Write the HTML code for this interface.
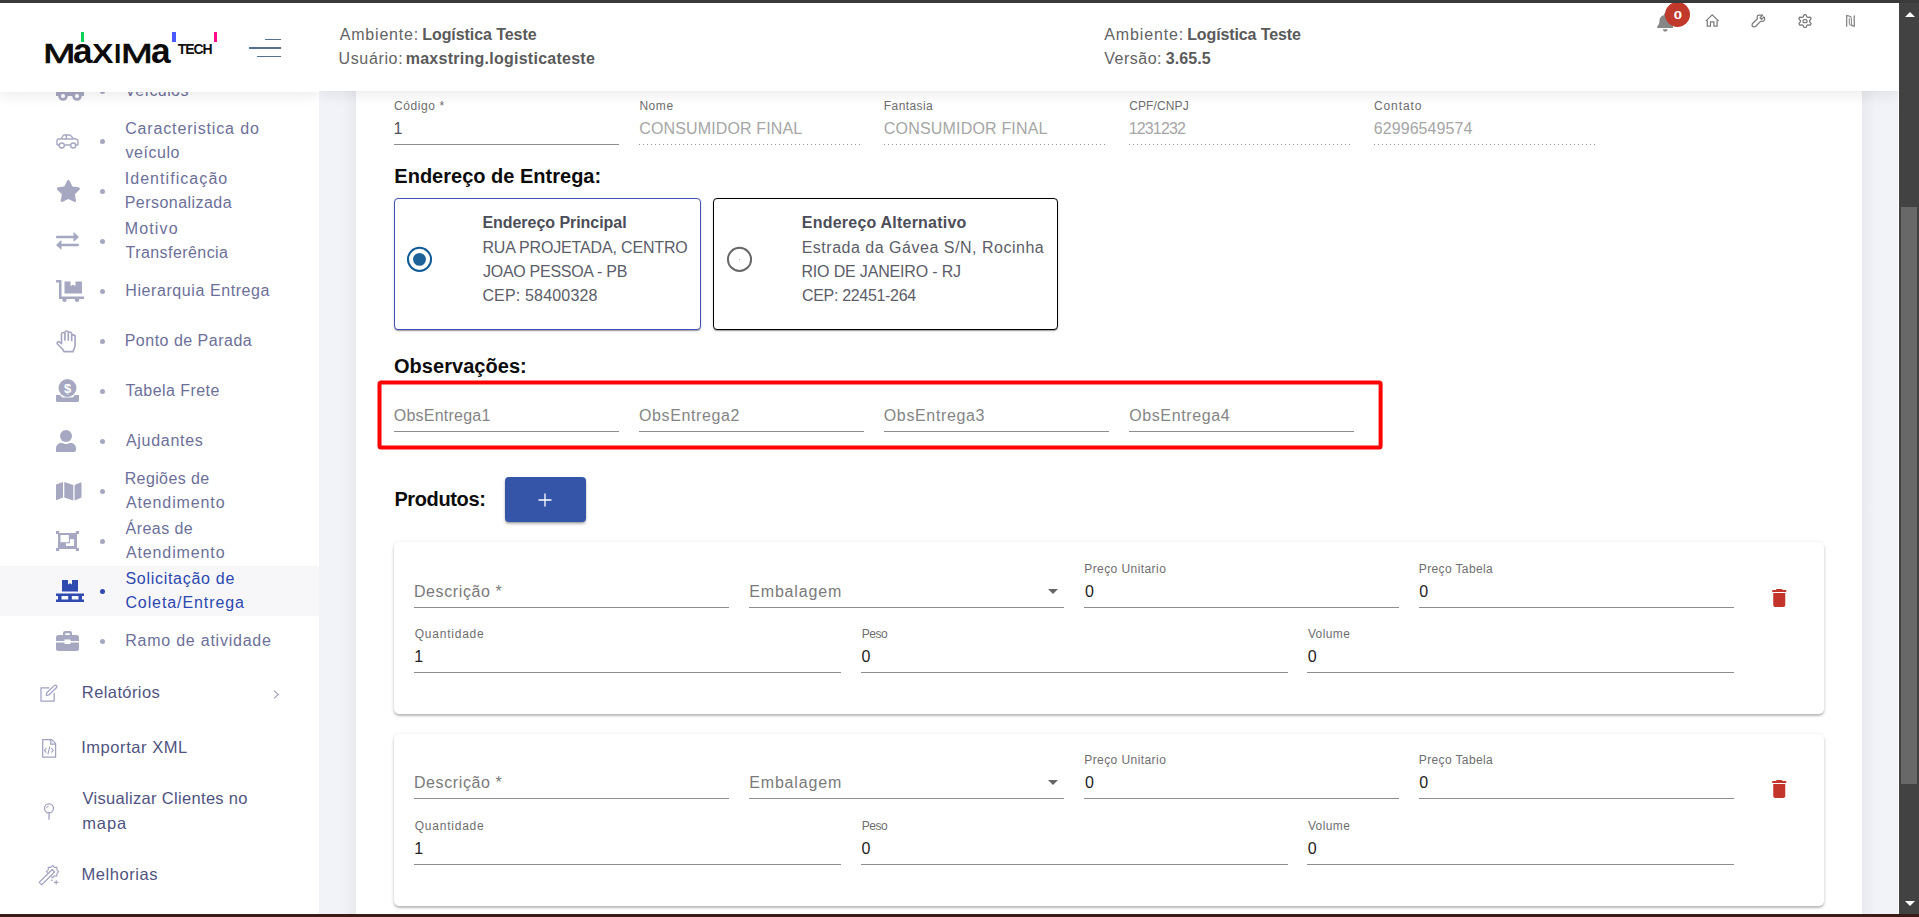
<!DOCTYPE html>
<html lang="pt-BR">
<head>
<meta charset="utf-8">
<title>Solicitação de Coleta/Entrega</title>
<style>
*{box-sizing:border-box;margin:0;padding:0}
html,body{width:1919px;height:917px;overflow:hidden;background:#fff;font-family:"Liberation Sans",sans-serif}
body{position:relative}
.abs,.layer,.layer>*{position:absolute}
.layer{left:0;top:0;width:1919px;height:917px}
.tl{position:absolute;white-space:nowrap;line-height:1}
#topbar{left:0;top:0;width:1919px;height:3px;background:#3a3a3a;z-index:30}
#botbar{left:0;top:914px;width:1919px;height:3px;background:#3a1b15;z-index:30}
#scroll{left:1899px;top:3px;width:20px;height:911px;background:#424242;z-index:25}
#scroll .thumb{position:absolute;left:2px;top:204px;width:16px;height:577px;background:#686868}
#scroll .up{position:absolute;left:6px;top:9px;width:0;height:0;border-left:5px solid transparent;border-right:5px solid transparent;border-bottom:5px solid #fff}
#scroll .dn{position:absolute;left:6px;top:898px;width:0;height:0;border-left:5px solid transparent;border-right:5px solid transparent;border-top:5px solid #fff}
#mainbg{left:319px;top:91px;width:1579px;height:823px;background:linear-gradient(90deg,#f2f3f9 0,#f2f3f9 23px,#e9e9f0 37px,#e9e9f0 1543px,#f2f3f9 1557px,#f2f3f9 100%)}
#card{left:356px;top:91px;width:1506px;height:823px;background:#fff}
#cardshr{display:none}
#sidebar{z-index:2;width:319px;background:#fff;overflow:hidden}
#sidebar .act{left:0;top:566px;width:319px;height:50px;background:#f7f7fa}
.dot{position:absolute;left:100px;width:5px;height:5px;border-radius:50%;background:#a6a8c2}
#sidebar svg{position:absolute}
#header{left:0;top:3px;width:1899px;height:88px;z-index:10}
#hsh{left:319px;top:3px;width:1580px;height:88px;background:#fff;box-shadow:0 3px 14px rgba(0,0,0,.085);clip-path:inset(0 0 -40px 0);z-index:9}
#brand{left:0;top:3px;width:319px;height:89px;background:#fff;box-shadow:0 3px 14px rgba(0,0,0,.085);clip-path:inset(0 0 -40px 0);z-index:9}
#header .layer{top:-3px}
.ln{position:absolute;height:1px;background:#8d8d8d}
.dl{position:absolute;height:1px;background-image:linear-gradient(90deg,rgba(0,0,0,.42) 0,rgba(0,0,0,.42) 35%,transparent 35%);background-size:4px 1px;background-repeat:repeat-x}
.addr{position:absolute;top:198px;height:132px;border:1px solid #000;border-radius:4px;background:#fff;box-shadow:0 2px 1px -1px rgba(0,0,0,.2),0 1px 1px 0 rgba(0,0,0,.14),0 1px 3px 0 rgba(0,0,0,.12)}
.addr.sel{border:1px solid #3f51b5}
.radio{position:absolute;width:25px;height:25px;border-radius:50%;border:1.500px solid #6e6e6e}
.radio.on{border:2.200px solid #1e5f9f}
.radio.on i{position:absolute;left:50%;top:50%;width:13px;height:13px;margin:-6.500px 0 0 -6.500px;border-radius:50%;background:#1e5f9f}
#redbox{left:378px;top:380.500px;width:1004px;height:69px;border:3.400px solid #fb0007;border-radius:2px}
#addbtn{left:505px;top:477px;width:80.500px;height:45px;border-radius:4px;background:#3555a8;box-shadow:0 2px 3px rgba(0,0,0,.28),0 1px 1px rgba(0,0,0,.12)}
.pcard{position:absolute;left:394px;width:1430px;height:172px;background:#fff;border-radius:5px;box-shadow:0 2px 2px rgba(0,0,0,.20),0 1px 4px rgba(0,0,0,.13)}
.tri{position:absolute;width:0;height:0;border-left:5.500px solid transparent;border-right:5.500px solid transparent;border-top:5.500px solid #666}
</style>
</head>
<body>
<div id="mainbg" class="abs"></div>
<div id="card" class="abs"></div>
<div id="cardshr" class="abs"></div>
<main class="layer" id="content">
<i class="ln" style="left:394px;top:144px;width:225px"></i><i class="dl" style="left:639px;top:144px;width:223px"></i><i class="dl" style="left:884px;top:144px;width:223px"></i><i class="dl" style="left:1129px;top:144px;width:223px"></i><i class="dl" style="left:1374px;top:144px;width:223px"></i><div class="addr sel" style="left:394px;width:307px"></div><svg class="abs" style="left:400px;top:240px" width="40" height="40" viewBox="0 0 40 40"><circle cx="19.500" cy="19.350" r="11.550" fill="none" stroke="#125b96" stroke-width="2"/><circle cx="19.500" cy="19.350" r="6.450" fill="#1d6199"/></svg><div class="addr" style="left:713px;width:345px"></div><svg class="abs" style="left:720px;top:240px" width="40" height="40" viewBox="0 0 40 40"><circle cx="19.500" cy="19.400" r="11.550" fill="none" stroke="#686868" stroke-width="2"/><circle cx="19.500" cy="19.500" r=".5" fill="#6fa0d0"/></svg><svg class="abs" style="left:370px;top:374px" width="1020" height="84" viewBox="370 374 1020 84"><rect x="379.500" y="382.400" width="1001.100" height="65" rx="1.500" fill="none" stroke="#ff0303" stroke-width="4"/></svg><i class="ln" style="left:394px;top:431px;width:225px"></i><i class="ln" style="left:639px;top:431px;width:225px"></i><i class="ln" style="left:884px;top:431px;width:225px"></i><i class="ln" style="left:1129px;top:431px;width:225px"></i><div id="addbtn" class="abs"><svg class="abs" style="left:33px;top:16px" width="14" height="14" viewBox="0 0 14 14"><path d="M7 .5v13M.5 7h13" stroke="#fff" stroke-width="1.300" fill="none"/></svg></div><div class="pcard" style="top:542px"></div><i class="ln" style="left:414px;top:607px;width:315px"></i><i class="ln" style="left:749px;top:607px;width:315px"></i><i class="ln" style="left:1084px;top:607px;width:315px"></i><i class="ln" style="left:1419px;top:607px;width:315px"></i><i class="ln" style="left:414px;top:672px;width:427px"></i><i class="ln" style="left:861px;top:672px;width:427px"></i><i class="ln" style="left:1307px;top:672px;width:427px"></i><i class="tri" style="left:1047.500px;top:589px"></i><svg class="abs" style="left:1772px;top:588.5px" width="14.500" height="18" viewBox="0 0 14 18"><path fill="#c3352b" d="M1 16c0 1.100.9 2 2 2h8c1.100 0 2-.9 2-2V4H1v12zM14 1h-3.500l-1-1h-5l-1 1H0v2h14V1z"/></svg><div class="pcard" style="top:734px"></div><i class="ln" style="left:414px;top:798px;width:315px"></i><i class="ln" style="left:749px;top:798px;width:315px"></i><i class="ln" style="left:1084px;top:798px;width:315px"></i><i class="ln" style="left:1419px;top:798px;width:315px"></i><i class="ln" style="left:414px;top:864px;width:427px"></i><i class="ln" style="left:861px;top:864px;width:427px"></i><i class="ln" style="left:1307px;top:864px;width:427px"></i><i class="tri" style="left:1047.500px;top:780px"></i><svg class="abs" style="left:1772px;top:779.5px" width="14.500" height="18" viewBox="0 0 14 18"><path fill="#c3352b" d="M1 16c0 1.100.9 2 2 2h8c1.100 0 2-.9 2-2V4H1v12zM14 1h-3.500l-1-1h-5l-1 1H0v2h14V1z"/></svg>
<span class="tl" id="t38" style="left:393.96px;top:100px;font-size:12px;color:#6e6e6e;letter-spacing:0.600px;">Código *</span>
<span class="tl" id="t39" style="left:639.39px;top:100px;font-size:12px;color:#6e6e6e;letter-spacing:0.580px;">Nome</span>
<span class="tl" id="t40" style="left:883.82px;top:100px;font-size:12px;color:#6e6e6e;letter-spacing:0.411px;">Fantasia</span>
<span class="tl" id="t41" style="left:1129.14px;top:100px;font-size:12px;color:#6e6e6e;letter-spacing:0.137px;">CPF/CNPJ</span>
<span class="tl" id="t42" style="left:1373.96px;top:100px;font-size:12px;color:#6e6e6e;letter-spacing:0.910px;">Contato</span>
<span class="tl" id="t43" style="left:393.54px;top:121px;font-size:16px;color:#50525a;">1</span>
<span class="tl" id="t44" style="left:639.32px;top:121px;font-size:16px;color:#a6a6a6;letter-spacing:0.128px;">CONSUMIDOR FINAL</span>
<span class="tl" id="t45" style="left:883.82px;top:121px;font-size:16px;color:#a6a6a6;letter-spacing:0.184px;">CONSUMIDOR FINAL</span>
<span class="tl" id="t46" style="left:1128.69px;top:121px;font-size:16px;color:#a6a6a6;letter-spacing:-0.850px;">1231232</span>
<span class="tl" id="t47" style="left:1373.82px;top:121px;font-size:16px;color:#a6a6a6;letter-spacing:0.060px;">62996549574</span>
<span class="tl" id="t48" style="left:394.32px;top:166px;font-size:20px;color:#0c0c0c;font-weight:bold;letter-spacing:0.006px;">Endereço de Entrega:</span>
<span class="tl" id="t49" style="left:393.96px;top:356px;font-size:20px;color:#0c0c0c;font-weight:bold;letter-spacing:0.044px;">Observações:</span>
<span class="tl" id="t50" style="left:394.39px;top:489px;font-size:20px;color:#0c0c0c;font-weight:bold;letter-spacing:-0.367px;">Produtos:</span>
<span class="tl" id="t51" style="left:482.39px;top:215px;font-size:16px;color:#4b4d58;font-weight:bold;letter-spacing:-0.039px;">Endereço Principal</span>
<span class="tl" id="t52" style="left:482.39px;top:240px;font-size:16px;color:#5b5d68;letter-spacing:-0.162px;">RUA PROJETADA, CENTRO</span>
<span class="tl" id="t53" style="left:483.02px;top:264px;font-size:16px;color:#5b5d68;letter-spacing:-0.280px;">JOAO PESSOA - PB</span>
<span class="tl" id="t54" style="left:482.39px;top:288px;font-size:16px;color:#5b5d68;letter-spacing:0.175px;">CEP: 58400328</span>
<span class="tl" id="t55" style="left:801.86px;top:215px;font-size:16px;color:#4b4d58;font-weight:bold;letter-spacing:0.215px;">Endereço Alternativo</span>
<span class="tl" id="t56" style="left:801.65px;top:240px;font-size:16px;color:#5b5d68;letter-spacing:0.514px;">Estrada da Gávea S/N, Rocinha</span>
<span class="tl" id="t57" style="left:801.44px;top:264px;font-size:16px;color:#5b5d68;letter-spacing:-0.167px;">RIO DE JANEIRO - RJ</span>
<span class="tl" id="t58" style="left:801.93px;top:288px;font-size:16px;color:#5b5d68;letter-spacing:-0.314px;">CEP: 22451-264</span>
<span class="tl" id="t59" style="left:393.82px;top:408px;font-size:16px;color:#858585;letter-spacing:0.228px;">ObsEntrega1</span>
<span class="tl" id="t60" style="left:639.01px;top:408px;font-size:16px;color:#858585;letter-spacing:0.600px;">ObsEntrega2</span>
<span class="tl" id="t61" style="left:883.76px;top:408px;font-size:16px;color:#858585;letter-spacing:0.648px;">ObsEntrega3</span>
<span class="tl" id="t62" style="left:1129.20px;top:408px;font-size:16px;color:#858585;letter-spacing:0.612px;">ObsEntrega4</span>
<span class="tl" id="t63" style="left:413.88px;top:584px;font-size:16px;color:#7a7a7a;letter-spacing:0.612px;">Descrição *</span>
<span class="tl" id="t64" style="left:749.25px;top:584px;font-size:16px;color:#7a7a7a;letter-spacing:0.825px;">Embalagem</span>
<span class="tl" id="t65" style="left:1084.26px;top:563px;font-size:12px;color:#6e6e6e;letter-spacing:0.425px;">Preço Unitario</span>
<span class="tl" id="t66" style="left:1084.96px;top:584px;font-size:16px;color:#222;">0</span>
<span class="tl" id="t67" style="left:1418.82px;top:563px;font-size:12px;color:#6e6e6e;letter-spacing:0.371px;">Preço Tabela</span>
<span class="tl" id="t68" style="left:1419.24px;top:584px;font-size:16px;color:#222;">0</span>
<span class="tl" id="t69" style="left:414.72px;top:628px;font-size:12px;color:#6e6e6e;letter-spacing:0.773px;">Quantidade</span>
<span class="tl" id="t70" style="left:414.16px;top:649px;font-size:16px;color:#222;">1</span>
<span class="tl" id="t71" style="left:861.64px;top:628px;font-size:12px;color:#6e6e6e;letter-spacing:-0.440px;">Peso</span>
<span class="tl" id="t72" style="left:861.55px;top:649px;font-size:16px;color:#222;">0</span>
<span class="tl" id="t73" style="left:1307.90px;top:628px;font-size:12px;color:#6e6e6e;letter-spacing:0.384px;">Volume</span>
<span class="tl" id="t74" style="left:1307.78px;top:649px;font-size:16px;color:#222;">0</span>
<span class="tl" id="t75" style="left:413.88px;top:775px;font-size:16px;color:#7a7a7a;letter-spacing:0.612px;">Descrição *</span>
<span class="tl" id="t76" style="left:749.25px;top:775px;font-size:16px;color:#7a7a7a;letter-spacing:0.825px;">Embalagem</span>
<span class="tl" id="t77" style="left:1084.26px;top:754px;font-size:12px;color:#6e6e6e;letter-spacing:0.425px;">Preço Unitario</span>
<span class="tl" id="t78" style="left:1084.96px;top:775px;font-size:16px;color:#222;">0</span>
<span class="tl" id="t79" style="left:1418.82px;top:754px;font-size:12px;color:#6e6e6e;letter-spacing:0.371px;">Preço Tabela</span>
<span class="tl" id="t80" style="left:1419.24px;top:775px;font-size:16px;color:#222;">0</span>
<span class="tl" id="t81" style="left:414.72px;top:820px;font-size:12px;color:#6e6e6e;letter-spacing:0.773px;">Quantidade</span>
<span class="tl" id="t82" style="left:414.16px;top:841px;font-size:16px;color:#222;">1</span>
<span class="tl" id="t83" style="left:861.64px;top:820px;font-size:12px;color:#6e6e6e;letter-spacing:-0.440px;">Peso</span>
<span class="tl" id="t84" style="left:861.55px;top:841px;font-size:16px;color:#222;">0</span>
<span class="tl" id="t85" style="left:1307.90px;top:820px;font-size:12px;color:#6e6e6e;letter-spacing:0.384px;">Volume</span>
<span class="tl" id="t86" style="left:1307.78px;top:841px;font-size:16px;color:#222;">0</span>
</main>
<nav class="layer" id="sidebar">
<div class="act"></div>
<svg style="left:56px;top:79px" width="28" height="22" viewBox="0 0 28 22" ><g fill="#a6a8c2"><path d="M0 0h18v4h5l5 6v7H0z"/><circle cx="7" cy="17" r="4.800"/><circle cx="21" cy="17" r="4.800"/></g><circle cx="7" cy="17" r="2.100" fill="#fff"/><circle cx="21" cy="17" r="2.100" fill="#fff"/></svg><svg style="left:56px;top:133.5px" width="23" height="15" viewBox="0 0 23 15" ><g fill="none" stroke="#a6a8c2" stroke-width="1.400" stroke-linejoin="round"><path d="M1 11V6.500q0-1.500 1.500-1.500H5l2.500-4h6.500l3.500 3.500 3 .8q1.500.4 1.500 2V11"/><path d="M1 11h2M8.500 11h6M20 11h2"/><path d="M5.500 5h12M10.300 1v4"/><circle cx="5.800" cy="11.500" r="2.500" fill="#fff"/><circle cx="17.200" cy="11.500" r="2.500" fill="#fff"/></g></svg><svg style="left:56px;top:180px" width="24.75" height="22" viewBox="0 0 576 512" ><path fill="#a6a8c2" d="M259.300 17.800L194 150.200 47.900 171.500c-26.200 3.800-36.700 36.100-17.700 54.600l105.700 103-25 145.500c-4.500 26.300 23.200 46 46.400 33.700L288 439.600l130.700 68.700c23.200 12.200 50.900-7.400 46.400-33.700l-25-145.500 105.700-103c19-18.500 8.500-50.800-17.700-54.600L382 150.200 316.700 17.800c-11.700-23.600-45.600-23.900-57.400 0z"/></svg><svg style="left:56px;top:231.5px" width="23" height="18" viewBox="0 0 23 18" ><g fill="#a6a8c2"><path d="M1 3.800h16.500V.8q0-.9.800-.3l4.200 3.900q.5.500 0 1L18.300 9.300q-.8.600-.8-.3V6.200H1q-1 0-1-1.200t1-1.200z"/><path d="M22 11.800H5.500V8.800q0-.9-.8-.3L.5 12.400q-.5.500 0 1l4.200 3.900q.8.600.8-.3v-2.800H22q1 0 1-1.200t-1-1.200z"/></g></svg><svg style="left:56px;top:279.5px" width="28" height="22" viewBox="0 0 28 22" ><g fill="#a6a8c2"><path d="M0 0h5.500v16.500H28v2.500H3V2.500H0z"/><path d="M8.500 1.500h6v4.500l2.500-1.300 2.500 1.300V1.500h6.500V13.500H8.500z"/><circle cx="8.500" cy="19.800" r="2.200"/><circle cx="21" cy="19.800" r="2.200"/></g></svg><svg style="left:56px;top:329.5px" width="21" height="23" viewBox="0 0 21 23" ><g fill="none" stroke="#a6a8c2" stroke-width="1.700" stroke-linecap="round" stroke-linejoin="round"><path d="M5.500 13.500V4.200a1.700 1.700 0 013.400 0V10M8.900 4.200V2.700a1.700 1.700 0 013.400 0V10M12.300 4V3.700a1.700 1.700 0 013.400 0V10.500M15.700 6.500a1.700 1.700 0 013.400 0V15c0 1.500-.6 3-1.300 4.500l-.8 2.200H8l-1.200-2.200L1.500 14c-1-1.200.7-3 2-1.900l2 1.600"/></g></svg><svg style="left:56px;top:379px" width="23" height="23" viewBox="0 0 23 23" ><g fill="#a6a8c2"><circle cx="11.500" cy="9" r="9"/><path d="M0 16h4l2.500 2.500h10L19 16h4v5.500q0 1.500-1.500 1.500h-20Q0 23 0 21.500z"/></g><text x="11.500" y="13.800" font-size="13" font-weight="bold" text-anchor="middle" fill="#fff" font-family="Liberation Sans,sans-serif">$</text></svg><svg style="left:56px;top:429.5px" width="20" height="22" viewBox="0 0 20 22" ><g fill="#a6a8c2"><circle cx="10" cy="6" r="6"/><path d="M0 22v-3.500c0-3.500 2.500-5.500 5.500-5.500h.8c1.200.6 2.400.9 3.700.9s2.500-.3 3.700-.9h.8c3 0 5.500 2 5.500 5.500V20q0 2-2 2H2Q0 22 0 22z"/></g></svg><svg style="left:56px;top:480.5px" width="25.5" height="20" viewBox="0 0 25.500 20" ><path fill="#a6a8c2" d="M0 3.500L7 1v15.500L1 19q-1 .4-1-.6zM8.300 1l9 3v15.500l-9-3zM18.600 4L24.500 1.500q1-.4 1 .6V16.500L18.600 19.500z"/></svg><svg style="left:56px;top:531px" width="23" height="20" viewBox="0 0 23 20" ><g fill="#a6a8c2"><rect x="2" y="2" width="19" height="16"/><rect x="0" y="0" width="3.200" height="3"/><rect x="19.800" y="0" width="3.200" height="3"/><rect x="0" y="17" width="3.200" height="3"/><rect x="19.800" y="17" width="3.200" height="3"/></g><rect x="9.900" y="8.200" width="8.200" height="6.800" fill="#fff"/><rect x="3.400" y="3" width="10.500" height="9.300" fill="#a6a8c2"/><rect x="4.500" y="4" width="8.300" height="7.200" fill="#fff"/></svg><svg style="left:56px;top:580px" width="28" height="22" viewBox="0 0 28 22" ><g fill="#2f4bb0"><path d="M6 0h6v4.500l2-1.200 2 1.200V0h6v11.500H6z"/><path d="M0 13.500h28V16H0zM0 19.500h28V22H0zM2 16h3.500v3.500H2zM12.200 16h3.600v3.500h-3.600zM22.500 16H26v3.500h-3.500z"/></g></svg><svg style="left:56px;top:631px" width="23" height="20" viewBox="0 0 23 20" ><path fill="#a6a8c2" d="M7 4V2q0-2 2-2h5q2 0 2 2v2h4.500q2.500 0 2.500 2.500V10h-8.500v-1.500h-6V10H0V6.500Q0 4 2.500 4zm2.200 0h4.600V2.200H9.200zM0 11.500h8.500V13h6v-1.500H23v6q0 2.500-2.500 2.500h-18Q0 20 0 17.500z" fill-rule="evenodd"/></svg><i class="dot" style="top:89px;background:#a6a8c2"></i><i class="dot" style="top:139px;background:#a6a8c2"></i><i class="dot" style="top:189px;background:#a6a8c2"></i><i class="dot" style="top:239px;background:#a6a8c2"></i><i class="dot" style="top:289px;background:#a6a8c2"></i><i class="dot" style="top:339px;background:#a6a8c2"></i><i class="dot" style="top:389px;background:#a6a8c2"></i><i class="dot" style="top:439px;background:#a6a8c2"></i><i class="dot" style="top:489px;background:#a6a8c2"></i><i class="dot" style="top:539px;background:#a6a8c2"></i><i class="dot" style="top:589px;background:#2f4bb0"></i><i class="dot" style="top:639px;background:#a6a8c2"></i><svg style="left:34px;top:676px" width="32" height="32" viewBox="0 0 32 32" ><g fill="none" stroke="#9fa1bf" stroke-width="1.250" stroke-linejoin="round"><path d="M15.400 11.900H7V25.100H20.200V17.100"/><path d="M12.300 19.500l.5-2.700 7.700-7.400a1.500 1.500 0 012.100 2.100l-7.700 7.500z"/></g></svg><svg style="left:273px;top:690px" width="7" height="9" viewBox="0 0 7 9" ><path d="M1 .7l4.300 3.800L1 8.300" fill="none" stroke="#a0a2bc" stroke-width="1.100"/></svg><svg style="left:34px;top:730px" width="32" height="32" viewBox="0 0 32 32" ><g fill="none" stroke="#9fa1bf" stroke-width="1.250" stroke-linejoin="round"><path d="M8.700 9.600H17.800L21.600 13.600V27H8.700z"/><path d="M16.800 9.600V14.200H21.600"/><path d="M12.400 18.200L10.500 20.400 12.400 22.600M15.800 16.400L13.900 24.400M17.300 18.200L19.300 20.400 17.300 22.600" stroke-width="1.100"/></g></svg><svg style="left:34px;top:794px" width="32" height="32" viewBox="0 0 32 32" ><g fill="none" stroke="#9fa1bf" stroke-width="1.250"><circle cx="15" cy="14.300" r="4.500"/><path d="M15 18.800V25.800"/><path d="M12.700 14.200Q12.900 12.500 14.600 12.100" stroke-width="1"/></g></svg><svg style="left:34px;top:858px" width="32" height="32" viewBox="0 0 32 32" ><defs><clipPath id="wc"><path d="M0 0H32V32H0zM4 24.400L18.100 10.300 21.800 14 7.700 28.100z" clip-rule="evenodd"/></clipPath></defs><g fill="none" stroke="#9fa1bf" stroke-width="1.250" stroke-linejoin="round"><path d="M18.60 7.40L20.36 9.35L22.98 9.22L22.85 11.84L24.80 13.60L22.85 15.36L22.98 17.98L20.36 17.85L18.60 19.80L16.84 17.85L14.22 17.98L14.35 15.36L12.40 13.60L14.35 11.84L14.22 9.22L16.84 9.35z" stroke-width="1.100" clip-path="url(#wc)"/><path d="M5.200 24.400L18.100 11.500 20.600 14 7.700 26.900z"/><path d="M22.200 22.200V26.600M20 24.400H24.400" stroke-width="1.100"/><circle cx="17.800" cy="22.300" r=".5" stroke-width="1"/></g></svg>
<span class="tl" id="t15" style="left:125.00px;top:83px;font-size:16px;color:#6c7099;letter-spacing:0.420px;">Veículos</span>
<span class="tl" id="t16" style="left:125.20px;top:121px;font-size:16px;color:#6c7099;letter-spacing:0.847px;">Caracteristica do</span>
<span class="tl" id="t17" style="left:125.55px;top:145px;font-size:16px;color:#6c7099;letter-spacing:0.540px;">veículo</span>
<span class="tl" id="t18" style="left:124.69px;top:171px;font-size:16px;color:#6c7099;letter-spacing:1.060px;">Identificação</span>
<span class="tl" id="t19" style="left:124.69px;top:195px;font-size:16px;color:#6c7099;letter-spacing:0.460px;">Personalizada</span>
<span class="tl" id="t20" style="left:124.69px;top:221px;font-size:16px;color:#6c7099;letter-spacing:1.164px;">Motivo</span>
<span class="tl" id="t21" style="left:125.55px;top:245px;font-size:16px;color:#6c7099;letter-spacing:0.435px;">Transferência</span>
<span class="tl" id="t22" style="left:125.25px;top:283px;font-size:16px;color:#6c7099;letter-spacing:0.582px;">Hierarquia Entrega</span>
<span class="tl" id="t23" style="left:124.69px;top:333px;font-size:16px;color:#6c7099;letter-spacing:0.493px;">Ponto de Parada</span>
<span class="tl" id="t24" style="left:125.55px;top:383px;font-size:16px;color:#6c7099;letter-spacing:0.442px;">Tabela Frete</span>
<span class="tl" id="t25" style="left:125.90px;top:433px;font-size:16px;color:#6c7099;letter-spacing:0.720px;">Ajudantes</span>
<span class="tl" id="t26" style="left:124.69px;top:471px;font-size:16px;color:#6c7099;letter-spacing:0.380px;">Regiões de</span>
<span class="tl" id="t27" style="left:125.90px;top:495px;font-size:16px;color:#6c7099;letter-spacing:0.888px;">Atendimento</span>
<span class="tl" id="t28" style="left:125.55px;top:521px;font-size:16px;color:#6c7099;letter-spacing:0.454px;">Áreas de</span>
<span class="tl" id="t29" style="left:125.90px;top:545px;font-size:16px;color:#6c7099;letter-spacing:0.888px;">Atendimento</span>
<span class="tl" id="t30" style="left:125.39px;top:571px;font-size:16px;color:#2c48ae;letter-spacing:0.720px;">Solicitação de</span>
<span class="tl" id="t31" style="left:125.39px;top:595px;font-size:16px;color:#2c48ae;letter-spacing:0.909px;">Coleta/Entrega</span>
<span class="tl" id="t32" style="left:125.18px;top:633px;font-size:16px;color:#6c7099;letter-spacing:0.772px;">Ramo de atividade</span>
<span class="tl" id="t33" style="left:81.85px;top:684px;font-size:16.5px;color:#4f537f;letter-spacing:0.400px;">Relatórios</span>
<span class="tl" id="t34" style="left:81.15px;top:739px;font-size:16.5px;color:#4f537f;letter-spacing:0.562px;">Importar XML</span>
<span class="tl" id="t35" style="left:82.55px;top:790px;font-size:16.5px;color:#4f537f;letter-spacing:0.314px;">Visualizar Clientes no</span>
<span class="tl" id="t36" style="left:82.20px;top:815px;font-size:16.5px;color:#4f537f;letter-spacing:0.920px;">mapa</span>
<span class="tl" id="t37" style="left:81.50px;top:866px;font-size:16.5px;color:#4f537f;letter-spacing:0.555px;">Melhorias</span>
</nav>
<div id="brand" class="abs"></div><div id="hsh" class="abs"></div>
<header id="header" class="abs"><div class="layer">
<i class="abs" style="left:80.500px;top:32px;width:3.500px;height:10px;background:#10d05c"></i><i class="abs" style="left:172px;top:32px;width:3.500px;height:10px;background:#4a5aff"></i><i class="abs" style="left:213.500px;top:32px;width:3.500px;height:10px;background:#ff0a8a"></i><i class="abs" style="left:265px;top:39px;width:16px;height:1px;background:#56708f"></i><i class="abs" style="left:249px;top:47px;width:32px;height:2px;background:#56708f"></i><i class="abs" style="left:257px;top:56px;width:24px;height:1px;background:#56708f"></i><svg class="abs" style="left:1656.500px;top:13px" width="16.500" height="18.500" viewBox="0 0 448 512"><path fill="#868686" d="M224 512c35.320 0 63.970-28.650 63.970-64H160.030c0 35.350 28.650 64 63.970 64zm215.390-149.710c-19.320-20.760-55.470-51.990-55.470-154.290 0-77.700-54.480-139.900-127.940-155.160V32c0-17.670-14.320-32-31.980-32s-31.980 14.330-31.980 32v20.840C118.560 68.100 64.080 130.300 64.080 208c0 102.300-36.150 133.530-55.470 154.290-6 6.450-8.660 14.160-8.610 21.710.11 16.400 12.980 32 32.100 32h383.800c19.120 0 32-15.600 32.100-32 .05-7.550-2.610-15.270-8.610-21.710z"/></svg><div class="abs" style="left:1665px;top:2px;width:25px;height:25px;border-radius:50%;background:#c0392b;color:#fff;font-weight:bold;font-size:11px;line-height:27.600px;text-align:center"><span style="display:inline-block;transform:translateX(.9px) scaleX(1.35)">0</span></div><svg class="abs" style="left:1704.800px;top:14.400px" width="14.400" height="12.800" viewBox="0 0 15 13.500"><g fill="none" stroke="#7c7c7c" stroke-width="1.300"><path d="M.6 7.500L7.500.9l6.900 6.600"/><path d="M2.300 6.500v6.300h3.400V8.300h3.600v4.500h3.400V6.500"/></g></svg><svg class="abs" style="left:1743px;top:8px" width="30" height="26" viewBox="0 0 30 26"><g fill="none" stroke="#7c7c7c" stroke-width="1.300" stroke-linejoin="round"><path d="M9.300 15.700L14.200 11V9Q14.200 7.200 16 7.200H19.600L17.100 9.700 18.500 11.300 21 9Q22 10.200 21.600 11.600 21 13.400 19 13.400H17.500L12.800 18.200Q11.500 19.200 10.100 18.600 8.500 17.500 9.300 15.700z"/></g></svg><svg class="abs" style="left:1797.500px;top:13.500px" width="14" height="14.500" viewBox="0 0 14 14.500"><g fill="none" stroke="#7c7c7c" stroke-width="1.300" stroke-linejoin="round"><path d="M6.14 0.66L7.86 0.66L8.80 2.86L9.86 3.47L12.24 3.18L13.10 4.67L11.66 6.59L11.66 7.81L13.10 9.73L12.24 11.22L9.86 10.93L8.80 11.54L7.86 13.74L6.14 13.74L5.20 11.54L4.14 10.93L1.76 11.22L0.90 9.73L2.34 7.81L2.34 6.59L0.90 4.67L1.76 3.18L4.14 3.47L5.20 2.86z"/><rect x="5" y="5.700" width="4" height="3" rx="1.300"/></g></svg><svg class="abs" style="left:1836px;top:8px" width="30" height="26" viewBox="0 0 30 26"><g fill="none" stroke="#8d8d8d" stroke-width="1.100" stroke-linejoin="round"><path d="M11.100 7.400V18.600" stroke="#d2d2d2" stroke-width="1.300"/><path d="M17.700 8V17.300" stroke="#d8d8d8" stroke-width="1.300"/><path d="M10.500 18.700V7.300L13.300 8.100Q15.400 8.600 15.400 10.800V15.600Q15.400 17.300 17 17.700L18.400 18.500"/><path d="M18.400 7.200V18.700"/><path d="M13.300 10.200V15.300Q13.300 17.200 15.300 17.500L18 18.300"/></g></svg>
<span class="tl" id="t8" style="left:42.68px;top:41px;font-size:27px;color:#0a0a0a;-webkit-text-stroke:.7px #0a0a0a;transform:scaleX(1.4457);transform-origin:0 0;">M</span><span class="tl" id="t9" style="left:72.53px;top:33px;font-size:35px;color:#0a0a0a;font-weight:bold;transform:scaleX(1.0013);transform-origin:0 0;">a</span><span class="tl" id="t10" style="left:92.01px;top:41px;font-size:27px;color:#0a0a0a;font-weight:bold;transform:scaleX(1.1913);transform-origin:0 0;">X</span><span class="tl" id="t11" style="left:114.21px;top:41px;font-size:27px;color:#0a0a0a;font-weight:bold;transform:scaleX(0.9725);transform-origin:0 0;">I</span><span class="tl" id="t12" style="left:121.11px;top:41px;font-size:27px;color:#0a0a0a;-webkit-text-stroke:.7px #0a0a0a;transform:scaleX(1.4107);transform-origin:0 0;">M</span><span class="tl" id="t13" style="left:150.52px;top:33px;font-size:35px;color:#0a0a0a;font-weight:bold;transform:scaleX(1.0066);transform-origin:0 0;">a</span><span class="tl" id="t14" style="left:177.85px;top:42px;font-size:14px;color:#111;font-weight:bold;letter-spacing:-1.100px;">TECH</span>
<span class="tl" id="t0" style="left:339.80px;top:27px;font-size:16px;color:#636363;letter-spacing:0.788px;">Ambiente:</span>
<span class="tl" id="t1" style="left:422.26px;top:27px;font-size:16px;color:#5a5a5a;font-weight:bold;letter-spacing:-0.069px;">Logística Teste</span>
<span class="tl" id="t2" style="left:338.54px;top:51px;font-size:16px;color:#636363;letter-spacing:0.643px;">Usuário:</span>
<span class="tl" id="t3" style="left:405.70px;top:51px;font-size:16px;color:#5a5a5a;font-weight:bold;letter-spacing:0.261px;">maxstring.logisticateste</span>
<span class="tl" id="t4" style="left:1104.32px;top:27px;font-size:16px;color:#636363;letter-spacing:0.847px;">Ambiente:</span>
<span class="tl" id="t5" style="left:1187.20px;top:27px;font-size:16px;color:#5a5a5a;font-weight:bold;letter-spacing:-0.120px;">Logística Teste</span>
<span class="tl" id="t6" style="left:1104.32px;top:51px;font-size:16px;color:#636363;letter-spacing:0.480px;">Versão:</span>
<span class="tl" id="t7" style="left:1165.86px;top:51px;font-size:16px;color:#5a5a5a;font-weight:bold;letter-spacing:0.072px;">3.65.5</span>
</div></header>
<div id="topbar" class="abs"></div>
<div id="scroll" class="abs"><i class="up"></i><i class="thumb"></i><i class="dn"></i></div>
<div id="botbar" class="abs"></div>
</body>
</html>
